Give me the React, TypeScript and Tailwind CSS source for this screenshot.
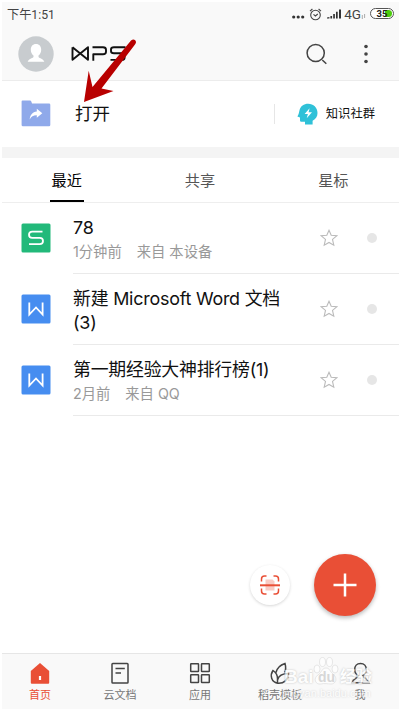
import type { ReactNode } from "react";

type FileKind = "sheet" | "doc";

type RecentFile = {
  kind: FileKind;
  name: string;
  time?: string;
  source?: string;
};

const files: RecentFile[] = [
  { kind: "sheet", name: "78", time: "1分钟前", source: "来自 本设备" },
  { kind: "doc", name: "新建 Microsoft Word 文档(3)" },
  { kind: "doc", name: "第一期经验大神排行榜(1)", time: "2月前", source: "来自 QQ" },
];

function StatusBar() {
  return (
    <div className="flex h-[25px] items-center pr-[5px] pl-[5px] text-[#444]">
      <span className="pt-px text-[12.2px] leading-none">下午1:51</span>
      <div className="ml-auto flex items-center">
        <svg width="13" height="4" viewBox="0 0 13 4" className="mt-[5px]" fill="#333">
          <circle cx="1.7" cy="2" r="1.6" />
          <circle cx="6.2" cy="2" r="1.6" />
          <circle cx="10.7" cy="2" r="1.6" />
        </svg>
        <svg width="13" height="13" viewBox="0 0 13 13" className="-mt-px ml-[4px]" fill="none" stroke="#444" strokeWidth="1.1">
          <circle cx="6.5" cy="7" r="4.8" />
          <path d="M1 3.2 3.4 1M12 3.2 9.6 1M4.5 6.3 6.4 8 8.8 6" />
        </svg>
        <svg width="15" height="10" viewBox="0 0 15 10" className="-mt-[2px] ml-[5px]" fill="#333">
          <path d="M0 9.5V8.6L2.4 8v1.5zM3.4 7h1.7v2.5H3.4zM6.2 5h1.7v4.5H6.2zM9 2.8h1.7v6.7H9zM12 .5h2v9h-2z" />
        </svg>
        <span className="ml-[2px] text-[13.5px] leading-none">4G</span>
        <svg width="5" height="5" viewBox="0 0 5 5" className="mt-[4px]" fill="none" stroke="#aaa" strokeWidth="1">
          <path d="M1.3 1v4M3.6 0v4" />
        </svg>
        <div className="relative -mt-[2px] ml-[4px] flex h-[11px] w-[24px] items-center justify-center overflow-hidden rounded-full border border-[#555] bg-white">
          <div className="absolute inset-y-px right-px w-[7px] rounded-r-full bg-[#4ccb0d]" />
          <span className="relative text-[9.5px] leading-none font-bold text-[#222]">35</span>
        </div>
      </div>
    </div>
  );
}

function WpsLogo() {
  return (
    <svg width="55" height="17" viewBox="0 0 55 17" className="ml-[17px]" fill="none" stroke="#111" strokeWidth="1.9" strokeLinejoin="round">
      <path d="M1.5 2.2V14.8L17 2.2V14.8L1.5 2.2" />
      <path d="M21.5 2.2H32Q35 2.2 35 4.7V6.8Q35 9.3 32 9.3H22.3V15.8" />
      <path d="M54.5 2.2H43Q40 2.2 40 4.4V6Q40 8.3 43 8.3H50.8Q53.6 8.3 53.6 10.7V12.5Q53.6 14.9 50.8 14.9H39.5" />
    </svg>
  );
}

function Header() {
  return (
    <div className="flex h-[53px] items-center pl-4">
      <svg width="36" height="36" viewBox="0 0 36 36">
        <circle cx="18" cy="18" r="17.7" fill="#c8cccf" />
        <path fill="#fff" d="M18 8c3.3 0 5.2 2.4 5.2 5.7 0 2.5-1 4.5-2.7 5.7v1.5c1 1.5 4.9 1.7 5.8 4.9H9.7c.9-3.2 4.8-3.4 5.8-4.9v-1.5c-1.7-1.2-2.7-3.2-2.7-5.7C12.8 10.4 14.7 8 18 8z" />
      </svg>
      <WpsLogo />
      <svg width="22" height="22" viewBox="0 0 22 22" className="ml-auto" fill="none" stroke="#444" strokeWidth="1.5">
        <circle cx="9.7" cy="10" r="8.6" />
        <path d="m16.3 17 4 3.7" />
      </svg>
      <svg width="4" height="20" viewBox="0 0 4 20" className="mr-[31px] ml-[36px]" fill="#444">
        <circle cx="2" cy="2.5" r="1.8" />
        <circle cx="2" cy="10" r="1.8" />
        <circle cx="2" cy="17.5" r="1.8" />
      </svg>
    </div>
  );
}

function OpenRow() {
  return (
    <div className="flex h-[67px] items-center border-t border-[#ececec] bg-white pl-[19px]">
      <svg width="30" height="27" viewBox="0 0 30 27" className="-mt-px">
        <path fill="#8fa9ea" d="M1.5.5H9q1 0 1.3 1l.7 2H28q1.3 0 1.3 1.3V25q0 1.3-1.3 1.3H2Q.6 26.3.6 25V1.5Q.6.5 1.5.5z" />
        <path fill="#fff" d="M15.8 8.8 21.3 13.3 15.8 17.7V15.3C12.5 15.2 10.2 16.7 8.7 19.4 9.2 14.8 11.5 12 15.8 11.5z" />
      </svg>
      <span className="ml-[24px] text-[17.5px] text-[#111]">打开</span>
      <div className="mr-[24px] ml-auto flex items-center">
        <div className="h-[20px] w-px bg-[#e6e6e6]" />
        <svg width="21" height="22" viewBox="0 0 21 22" className="ml-[22px]">
          <path fill="#2fc1d8" d="M11.2.7c5.2 0 9.3 3.8 9.3 9.2 0 3.8-1.6 5.9-4.9 7.9v3.7H8v-2.8H4.2q-1.2 0-1.2-1.2v-2.9L.4 13.5C2 11 1.900 9.500 2.500 7.200 3.600 3 6.800.7 11.200.7z" />
          <path fill="#fff" d="M12.6 5.2 7.6 11h3.3l-1.2 4.3 5.3-6h-3.4z" />
        </svg>
        <span className="ml-[8px] text-[12.3px] text-[#111]">知识社群</span>
      </div>
    </div>
  );
}

function Tabs() {
  return (
    <div className="h-[45px] border-b border-[#eee] bg-white text-[15.2px] text-[#555]">
      <div className="-ml-[2px] grid h-full w-[400px] grid-cols-3">
        <div className="relative flex items-center justify-center pt-[2px] text-black">
          最近
          <div className="absolute bottom-0 h-[2px] w-[34px] bg-black" />
        </div>
        <div className="flex items-center justify-center pt-[2px]">共享</div>
        <div className="flex items-center justify-center pt-[2px]">星标</div>
      </div>
    </div>
  );
}

function FileIcon({ kind }: { kind: FileKind }) {
  return (
    <svg width="30" height="30" viewBox="0 0 30 30" className="mt-[20px] shrink-0" fill="none" stroke="#fff" strokeWidth="1.8">
      {kind === "sheet" ? (
        <>
          <rect x=".5" y=".5" width="29" height="29" rx="1.5" fill="#22b97a" stroke="none" />
          <path d="M21.5 8.6H11.3Q8 8.6 8 11.7T11.3 14.8H18.7Q22 14.8 22 18T18.7 21.2H8" />
        </>
      ) : (
        <>
          <rect x=".5" y=".5" width="29" height="29" rx="1.5" fill="#468df0" stroke="none" />
          <path d="M8.3 8.6V20.5L15 13.5 21.6 20.5V8.6" />
        </>
      )}
    </svg>
  );
}

function FileRow({ file }: { file: RecentFile }) {
  return (
    <div className="flex h-[71px] bg-white pl-[19px]">
      <FileIcon kind={file.kind} />
      <div className="ml-[22px] flex flex-1 border-b border-[#eaeaea] font-['Inter','Noto_Sans_CJK_SC',sans-serif]">
        <div className="w-[222px] pt-[13px]">
          <div className="pr-[10px] text-[17.9px] leading-[24px] tracking-[-0.22px] text-[#111]">{file.name}</div>
          {file.time && (
            <div className="flex gap-[15px] text-[14.3px] leading-[23px] text-[#999]">
              <span>{file.time}</span>
              <span>{file.source}</span>
            </div>
          )}
        </div>
        <svg width="18" height="18" viewBox="0 0 18 18" className="mt-[26px] ml-[25px]" fill="none" stroke="#bbb" strokeWidth="1.1">
          <path d="m9 1.3 2.2 5 5.5.5-4.2 3.6 1.3 5.8L9 13.5l-4.8 2.7 1.3-5.8L1.3 6.8l5.5-.5z" />
        </svg>
        <div className="mt-[30px] ml-[29px] size-[10px] rounded-full bg-[#e6e6e6]" />
      </div>
    </div>
  );
}

function FloatingButtons() {
  return (
    <div className="absolute right-[24px] bottom-[95px] flex items-center">
      <div className="flex size-[40px] items-center justify-center rounded-full bg-white shadow-[0_1px_3px_rgba(0,0,0,0.16)]">
        <svg width="20" height="20" viewBox="0 0 20 20" fill="none" stroke="#e94f36" strokeWidth="1.5">
          <path fill="#f9cbc4" stroke="none" d="M5.5 4.5h7l2 2v9h-9z" />
          <path d="M1.5 6.5V4Q1.5 1 4.5 1H6.5M13.5 1h2q3 0 3 3v2.5M18.5 13.5V16q0 3-3 3h-2M6.5 19h-2q-3 0-3-3v-2.5" />
          <path strokeWidth="2" d="M0 10.3h20" />
        </svg>
      </div>
      <div className="ml-[24px] flex size-[62px] items-center justify-center rounded-full bg-[#e94f36] shadow-[0_2px_4px_rgba(0,0,0,0.28)]">
        <svg width="24" height="24" viewBox="0 0 24 24" stroke="#fff" strokeWidth="2.5">
          <path d="M12 .5v23M.5 12h23" />
        </svg>
      </div>
    </div>
  );
}

function NavItem({ label, active, children }: { label: string; active?: boolean; children: ReactNode }) {
  return (
    <div className={active ? "flex flex-col items-center text-[#e94f36]" : "flex flex-col items-center text-[#777]"}>
      <svg width="24" height="24" viewBox="0 0 24 24" fill="none" stroke="#444" strokeWidth="1.5">
        {children}
      </svg>
      <span className="mt-[4px] text-[11px] leading-[14px] whitespace-nowrap">{label}</span>
    </div>
  );
}

function BottomNav() {
  return (
    <div className="mt-auto h-[56px] border-t border-[#e6e6e6] bg-[#f9f9f9] pt-[7px]">
      <div className="-ml-[2px] grid w-[400px] grid-cols-5">
        <NavItem label="首页" active>
          <path fill="#e94f36" stroke="none" d="M12 2 21.2 10v11.7q0 1-1 1H3.8q-1 0-1-1V10z" />
          <path fill="#fff" stroke="none" d="M10.9 15h2.2v4h-2.2z" />
        </NavItem>
        <NavItem label="云文档">
          <rect x="4" y="2.5" width="16" height="19.5" rx=".8" />
          <path d="M7.5 7.5h9.3M7.5 12h5.5" />
        </NavItem>
        <NavItem label="应用">
          <rect x="2.7" y="2.7" width="7.8" height="7.8" rx=".5" />
          <rect x="13.5" y="2.7" width="7.8" height="7.8" rx=".5" />
          <rect x="2.7" y="13.7" width="7.8" height="7.8" rx=".5" />
          <rect x="13.5" y="13.7" width="7.8" height="7.8" rx=".5" />
        </NavItem>
        <NavItem label="稻壳模板">
          <path d="M9.5 22.2C3.5 21 1.5 14.5 5 9.5 8 11.5 9.5 14 9.5 17.5V22M8 11.5C9 7 12.5 4 17 2.5 18 6 18 9 16.5 11.5M9.5 19C10.5 15 14 12.5 20.5 12.5 20.5 18.5 16 22.8 9.5 22.2" />
        </NavItem>
        <NavItem label="我">
          <path d="M12.5 2.5c-3.8 0-5.8 2.7-5.8 5.9 0 3 1.4 5 3.6 6.2-.5 2.6-5.4 3.2-6.5 7.2h17.4c-1.1-4-6-4.6-6.5-7.2 2.2-1.2 3.6-3.2 3.6-6.2 0-3.2-2-5.9-5.8-5.9z" />
        </NavItem>
      </div>
    </div>
  );
}

function Watermark() {
  return (
    <div className="absolute top-[655px] left-[283px] h-[48px] w-[92px] font-['Liberation_Sans','Noto_Sans_CJK_SC',sans-serif] text-white opacity-75">
      <svg width="26" height="28" viewBox="0 0 26 28" className="absolute top-[2px] left-[30px]" fill="#fff" stroke="#d4d4d4" strokeWidth=".7">
        <ellipse cx="4" cy="12" rx="3" ry="4" />
        <ellipse cx="9.5" cy="5" rx="3" ry="4.5" />
        <ellipse cx="16.5" cy="5" rx="3" ry="4.5" />
        <ellipse cx="22" cy="12" rx="3" ry="4" />
        <path d="M13 11c4 0 4 4 7 6 5 4 3 10-2 10-3 0-7-1-10 0-6 1-8-6-3-9 4-3 4-7 8-7z" />
      </svg>
      <div className="absolute top-[12px] left-[1px] flex items-center text-[19px] leading-none font-bold [text-shadow:0_0_2px_#aaa]">
        <span className="w-[29px]">Bai</span>
        <span className="w-[27px] pl-[5px] text-[14px] text-[#ccc] [text-shadow:none]">du</span>
        <span className="text-[16px]">经验</span>
      </div>
      <span className="absolute top-[33px] left-[-1px] text-[11px] leading-none [text-shadow:0_0_2px_#bbb]">jingyan.baidu.com</span>
    </div>
  );
}

export default function App() {
  return (
    <div className="relative flex h-[711px] w-[400px] flex-col overflow-hidden bg-white pt-[2px] pr-px pb-[2px] pl-[2px] font-['Roboto','Noto_Sans_CJK_SC',sans-serif]">
      <div className="bg-[#f9f9f9]">
        <StatusBar />
        <Header />
      </div>
      <OpenRow />
      <div className="h-[11px] bg-[#f4f4f4]" />
      <Tabs />
      {files.map((file) => (
        <FileRow key={file.name} file={file} />
      ))}
      <BottomNav />
      <FloatingButtons />
      <Watermark />
      {/* pointer drawn over the open action */}
      <svg width="60" height="70" viewBox="0 0 60 70" className="absolute top-[36px] left-[80px]" fill="#b80000">
        <path d="M51 4.5Q53.5 2.5 55.2 4.3T55 8.5L21.5 52.5 33.5 55 4 66 8.7 34.7 12.5 51z" />
      </svg>
    </div>
  );
}
